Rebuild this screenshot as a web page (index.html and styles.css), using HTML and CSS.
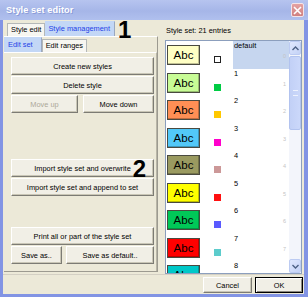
FILE: index.html
```html
<!DOCTYPE html>
<html lang="en">

<head>
  <meta charset="UTF-8" />
  <meta name="viewport" content="width=device-width, initial-scale=1.0" />
  <title>Style set editor</title>
  <link rel="stylesheet" href="styles.css">
</head>

<body>
  <div class="window">
    <div class="titlebar">
      <span class="title">Style set editor</span>
      <span class="close">
        <svg width="9" height="9" viewBox="0 0 9 9"><path d="M1 1L8 8M8 1L1 8" stroke="#fff" stroke-width="1.6" /></svg>
      </span>
    </div>

    <div class="frame">
      <div class="main">
        <div class="left">
          <div class="tabs outer">
            <span class="tab">Style edit</span>
            <span class="tab active">Style management</span>
            <span class="mark mark-1">1</span>
          </div>

          <div class="page">
            <div class="tabs inner">
              <span class="tab active">Edit set</span>
              <span class="tab">Edit ranges</span>
            </div>

            <div class="inner-page">
              <button class="btn">Create new styles</button>
              <button class="btn">Delete style</button>
              <div class="btn-row">
                <button class="btn move-up" disabled>Move up</button>
                <button class="btn grow">Move down</button>
              </div>

              <div class="import">
                <button class="btn">Import style set and overwrite</button>
                <span class="mark mark-2">2</span>
              </div>
              <button class="btn">Import style set and append to set</button>

              <button class="btn print">Print all or part of the style set</button>
              <div class="btn-row">
                <button class="btn save">Save as..</button>
                <button class="btn grow">Save as default..</button>
              </div>
            </div>
          </div>
        </div>

        <div class="right">
          <div class="caption">Style set: 21 entries</div>
          <div class="list">
            <div class="rows">
              <div class="row selected">
                <div class="cell-swatch"><div class="swatch s0">Abc</div></div>
                <div class="cell-dot"><span class="dot hollow"></span></div>
                <div class="cell-name"><span>default</span><span class="idx">0</span></div>
              </div>
              <div class="row">
                <div class="cell-swatch"><div class="swatch s1">Abc</div></div>
                <div class="cell-dot"><span class="dot d1"></span></div>
                <div class="cell-name"><span>1</span><span class="idx">1</span></div>
              </div>
              <div class="row">
                <div class="cell-swatch"><div class="swatch s2">Abc</div></div>
                <div class="cell-dot"><span class="dot d2"></span></div>
                <div class="cell-name"><span>2</span><span class="idx">2</span></div>
              </div>
              <div class="row">
                <div class="cell-swatch"><div class="swatch s3">Abc</div></div>
                <div class="cell-dot"><span class="dot d3"></span></div>
                <div class="cell-name"><span>3</span><span class="idx">3</span></div>
              </div>
              <div class="row">
                <div class="cell-swatch"><div class="swatch s4">Abc</div></div>
                <div class="cell-dot"><span class="dot d4"></span></div>
                <div class="cell-name"><span>4</span><span class="idx">4</span></div>
              </div>
              <div class="row">
                <div class="cell-swatch"><div class="swatch s5">Abc</div></div>
                <div class="cell-dot"><span class="dot d5"></span></div>
                <div class="cell-name"><span>5</span><span class="idx">5</span></div>
              </div>
              <div class="row">
                <div class="cell-swatch"><div class="swatch s6">Abc</div></div>
                <div class="cell-dot"><span class="dot d6"></span></div>
                <div class="cell-name"><span>6</span><span class="idx">6</span></div>
              </div>
              <div class="row">
                <div class="cell-swatch"><div class="swatch s7">Abc</div></div>
                <div class="cell-dot"><span class="dot d7"></span></div>
                <div class="cell-name"><span>7</span><span class="idx">7</span></div>
              </div>
              <div class="row">
                <div class="cell-swatch"><div class="swatch s8">Abc</div></div>
                <div class="cell-dot"><span class="dot d8"></span></div>
                <div class="cell-name"><span>8</span><span class="idx">8</span></div>
              </div>
            </div>

            <div class="scrollbar">
              <div class="arrow">
                <svg width="7" height="5" viewBox="0 0 7 5"><path d="M0.5 4L3.5 1L6.5 4" fill="none" stroke="#4d6185" stroke-width="1.4" /></svg>
              </div>
              <div class="track">
                <div class="thumb"><span class="grip"></span></div>
              </div>
              <div class="arrow">
                <svg width="7" height="5" viewBox="0 0 7 5"><path d="M0.5 1L3.5 4L6.5 1" fill="none" stroke="#4d6185" stroke-width="1.4" /></svg>
              </div>
            </div>
          </div>
        </div>
      </div>

      <div class="footer">
        <button class="btn">Cancel</button>
        <button class="btn default">OK</button>
      </div>
    </div>
  </div>
</body>

</html>
```

FILE: styles.css
```css
body {
  margin: 0;
  font-family: "Liberation Sans", Arial, sans-serif;
  font-size: 7.4px;
  color: #000;
}

.window {
  width: 308px;
  height: 297px;
  display: flex;
  flex-direction: column;
  background-color: #8294e4;
  overflow: hidden;
}

/* title bar */

.titlebar {
  height: 20px;
  flex-shrink: 0;
  display: flex;
  align-items: center;
  justify-content: space-between;
  padding: 0 4px 0 6px;
  background: linear-gradient(#b6c4ef, #a6b6e8 55%, #b0c0ee);
}

.title {
  color: #fff;
  font-weight: bold;
  font-size: 9.2px;
  letter-spacing: 0.1px;
  text-shadow: 1px 1px 0 #8a9bd8;
}

.close {
  width: 13px;
  height: 14px;
  box-sizing: border-box;
  border: 1px solid #f4e4e8;
  border-radius: 2px;
  background: linear-gradient(#e4a2a2, #d08080);
  display: flex;
  align-items: center;
  justify-content: center;
}

/* client area */

.frame {
  flex: 1;
  min-height: 0;
  display: flex;
  flex-direction: column;
  margin: 0 4px 3px 3px;
  background-color: #ece9d8;
}

.main {
  flex: 1;
  display: flex;
  min-height: 0;
}

.left {
  width: 154px;
  margin-left: 1px;
  display: flex;
  flex-direction: column;
  margin-bottom: 2px;
}

.tabs {
  display: flex;
  align-items: flex-end;
  flex-shrink: 0;
}

.tabs.outer {
  position: relative;
  height: 16px;
  padding-left: 3px;
}

.tabs.inner {
  height: 15px;
}

.tab {
  height: 12px;
  line-height: 12px;
  padding: 0 3px;
  background-color: #f7f6f1;
  border: 1px solid #b4b8b8;
  border-bottom: none;
  white-space: nowrap;
}

.tab.active {
  height: 14px;
  line-height: 14px;
  padding: 0 4px 0 2px;
  background-color: #c3d7f6;
  color: #1f3fe6;
  border-color: #c3d7f6 #9aa8c0 #c3d7f6 #c3d7f6;
}

.tabs.inner .tab.active {
  padding: 0 8px 0 3px;
}

.page {
  flex: 1;
  display: flex;
  flex-direction: column;
  border-top: 1px solid #fff;
  border-right: 1px solid #9c9a90;
  border-bottom: 1px solid #9c9a90;
}

.inner-page {
  flex: 1;
  border-top: 1px solid #fff;
  border-right: 1px solid #b8b5a6;
  padding: 4px 2px 0 7px;
  display: flex;
  flex-direction: column;
}

.btn {
  height: 18px;
  flex-shrink: 0;
  margin: 0 0 1px;
  padding: 0;
  font: inherit;
  color: #000;
  background-color: #f1efe6;
  border: 1px solid;
  border-color: #fff #7c7b74 #7c7b74 #fff;
  box-shadow: inset -1px -1px 0 #c9c6b6;
}

.btn:disabled {
  color: #aca899;
}

.btn-row {
  display: flex;
  gap: 5px;
}

.btn-row .grow {
  flex: 1;
}

.move-up {
  width: 67px;
}

.save {
  width: 51px;
}

.btn-row .save + .grow {
  margin-left: -1px;
}

.import {
  position: relative;
  display: flex;
  flex-direction: column;
  margin-top: 45px;
}

.print {
  margin-top: 30px;
}

.mark {
  position: absolute;
  font-size: 24px;
  font-weight: bold;
  line-height: 18px;
  color: #000;
}

.mark-1 {
  left: 114px;
  top: 1px;
}

.mark-2 {
  right: 8px;
  top: 1px;
}

/* style list */

.right {
  flex: 1;
  display: flex;
  flex-direction: column;
  min-height: 0;
  margin: 0 2px 0 7px;
}

.caption {
  height: 20px;
  flex-shrink: 0;
  box-sizing: border-box;
  padding: 6px 0 0 1px;
  line-height: 10px;
}

.list {
  flex: 1;
  display: flex;
  min-height: 0;
  overflow: hidden;
  background-color: #fff;
  border: 1px solid #8c9fbd;
}

.rows {
  flex: 1;
  overflow: hidden;
}

.row {
  height: 27.5px;
  display: grid;
  grid-template-columns: 46px 21px 1fr;
}

.cell-swatch {
  padding: 4px 0 0 1px;
}

.swatch {
  width: 33px;
  height: 20px;
  box-sizing: border-box;
  border: 1px solid #4a4a40;
  box-shadow: inset -1px -1px 0 rgba(0, 0, 0, 0.25);
  font-size: 11.5px;
  line-height: 18px;
  text-align: center;
}

.s0 { background-color: #ffffc4; }
.s1 { background-color: #c8fc96; }
.s2 { background-color: #ff8f55; }
.s3 { background-color: #52c8f8; }
.s4 { background-color: #9a9a60; }
.s5 { background-color: #ffff00; }
.s6 { background-color: #00c858; }
.s7 { background-color: #ff0000; }
.s8 { background-color: #00c8c8; }

.cell-dot {
  padding: 15px 0 0 2px;
}

.dot {
  display: block;
  width: 7px;
  height: 7px;
}

.dot.hollow {
  box-sizing: border-box;
  border: 1px solid #222;
}

.d1 { background-color: #00cc44; }
.d2 { background-color: #ffc800; }
.d3 { background-color: #ff00cc; }
.d4 { background-color: #cc9898; }
.d5 { background-color: #ff1010; }
.d6 { background-color: #5a5aff; }
.d7 { background-color: #5ccccc; }
.d8 { background-color: #5ccccc; }

.cell-name {
  display: flex;
  flex-direction: column;
  padding: 0 3px 0 1px;
  line-height: 10px;
}

.row.selected .cell-name {
  background-color: #c6d6ef;
}

.idx {
  align-self: flex-end;
  margin-top: 1px;
  font-size: 5.5px;
  line-height: 8px;
  color: #c4c4c4;
}

.scrollbar {
  width: 12px;
  display: flex;
  flex-direction: column;
  background-color: #f3f5fb;
}

.arrow {
  height: 14px;
  flex-shrink: 0;
  box-sizing: border-box;
  border: 1px solid #bccbf2;
  border-radius: 2px;
  background: linear-gradient(135deg, #e0e8fe, #c4d2f6);
  display: flex;
  align-items: center;
  justify-content: center;
}

.track {
  flex: 1;
  min-height: 0;
  padding-top: 1px;
}

.thumb {
  height: 74px;
  box-sizing: border-box;
  border: 1px solid #b2c3ef;
  border-radius: 2px;
  background: linear-gradient(90deg, #c2d0f6, #cbd8fa);
  display: flex;
  justify-content: center;
  padding-top: 33px;
}

.grip {
  width: 5px;
  height: 4px;
  border-top: 1px solid #eef2fd;
  border-bottom: 1px solid #eef2fd;
}

/* bottom buttons */

.footer {
  height: 20px;
  flex-shrink: 0;
  box-sizing: border-box;
  display: flex;
  justify-content: flex-end;
  gap: 3px;
  padding: 2px 1px 0 0;
  border-top: 1px solid #d4d0c4;
}

.footer .btn {
  height: 16px;
  width: 49px;
}

.footer .btn.default {
  width: 48px;
  border-color: #000;
  box-shadow: inset 1px 1px 0 #fff, inset -1px -1px 0 #8a887e;
}
```
